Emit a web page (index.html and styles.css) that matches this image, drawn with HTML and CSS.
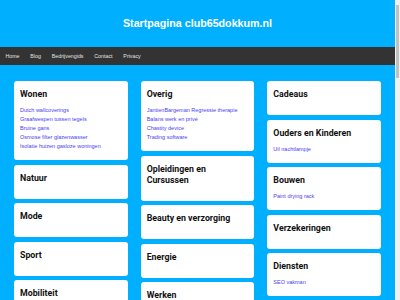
FILE: index.html
```html
<!DOCTYPE html>
<html lang="nl">
<head>
<meta charset="utf-8">
<title>Startpagina club65dokkum.nl</title>
<link rel="stylesheet" href="styles.css">
</head>
<body>
<div class="page">
<header class="site-header">
  <h1 class="site-title">Startpagina club65dokkum.nl</h1>
</header>
<nav class="site-nav">
  <a href="#">Home</a>
  <a href="#">Blog</a>
  <a href="#">Bedrijvengids</a>
  <a href="#">Contact</a>
  <a href="#">Privacy</a>
</nav>
<main class="board">
  <div class="col">
    <section class="card">
      <h2>Wonen</h2>
      <ul>
        <li><a href="#">Dutch wallcoverings</a></li>
        <li><a href="#">Graafwespen tussen tegels</a></li>
        <li><a href="#">Bruine gans</a></li>
        <li><a href="#">Osmose filter glazenwasser</a></li>
        <li><a href="#">Isolatie huizen gasloze woningen</a></li>
      </ul>
    </section>
    <section class="card"><h2>Natuur</h2></section>
    <section class="card"><h2>Mode</h2></section>
    <section class="card"><h2>Sport</h2></section>
    <section class="card"><h2>Mobiliteit</h2></section>
    <section class="card"><h2>Vakantie</h2></section>
    <section class="card"><h2>Gezondheid</h2></section>
  </div>
  <div class="col">
    <section class="card">
      <h2>Overig</h2>
      <ul>
        <li><a href="#">JantienBargeman Regressie therapie</a></li>
        <li><a href="#">Balans werk en privé</a></li>
        <li><a href="#">Chastity device</a></li>
        <li><a href="#">Trading software</a></li>
      </ul>
    </section>
    <section class="card"><h2>Opleidingen en Cursussen</h2></section>
    <section class="card"><h2>Beauty en verzorging</h2></section>
    <section class="card"><h2>Energie</h2></section>
    <section class="card"><h2>Werken</h2></section>
    <section class="card"><h2>Financieel</h2></section>
  </div>
  <div class="col">
    <section class="card"><h2>Cadeaus</h2></section>
    <section class="card">
      <h2>Ouders en Kinderen</h2>
      <ul>
        <li><a href="#">Uil nachtlampje</a></li>
      </ul>
    </section>
    <section class="card">
      <h2>Bouwen</h2>
      <ul>
        <li><a href="#">Paint drying rack</a></li>
      </ul>
    </section>
    <section class="card"><h2>Verzekeringen</h2></section>
    <section class="card">
      <h2>Diensten</h2>
      <ul>
        <li><a href="#">SEO vakman</a></li>
      </ul>
    </section>
    <section class="card"><h2>Hobby</h2></section>
  </div>
</main>
</div>
<div class="scrollbar" aria-hidden="true"><div class="scrollbar-thumb"></div></div>
</body>
</html>
```

FILE: styles.css
```css
html {
  background: #00b0ff;
}
body {
  margin: 0;
  padding-right: 5px;
  background: #00b0ff;
  font-family: "Liberation Sans", Arial, sans-serif;
}
.page {
  min-height: 1190px;
}
.scrollbar {
  position: fixed;
  top: 0;
  right: 0;
  width: 5px;
  height: 100vh;
  background: #f1f1f1;
  display: flex;
  flex-direction: column;
  padding: 5px 0 5px 1px;
  box-sizing: border-box;
}
.scrollbar-thumb {
  width: 3px;
  height: 73px;
  background: #c1c1c1;
}
.site-header {
  height: 47px;
  display: flex;
  align-items: center;
  justify-content: center;
}
.site-title {
  margin: 0;
  color: #ffffff;
  font-size: 10.7px;
  font-weight: 700;
  line-height: 1;
}
.site-nav {
  height: 18px;
  background: #333333;
  display: flex;
  align-items: center;
}
.site-nav a {
  color: #e2e2e2;
  text-decoration: none;
  font-size: 5.3px;
  padding: 0 5.4px;
}
.board {
  display: grid;
  grid-template-columns: repeat(3, 1fr);
  column-gap: 13px;
  padding: 16px 14px 0;
  align-items: start;
}
.col {
  display: flex;
  flex-direction: column;
  gap: 4.5px;
}
.card {
  background: #ffffff;
  border-radius: 3px;
  padding: 8px 6px 9px;
}
.card h2 {
  margin: 0 0 6px;
  font-family: Roboto, "Liberation Sans", sans-serif;
  font-weight: 700;
  font-size: 8.8px;
  line-height: 11px;
  color: #111111;
}
.card ul {
  list-style: none;
  margin: 0;
  padding: 0;
}
.card li {
  line-height: 9px;
  font-size: 5.5px;
}
.card a {
  color: #4a3df2;
  text-decoration: none;
}
```
